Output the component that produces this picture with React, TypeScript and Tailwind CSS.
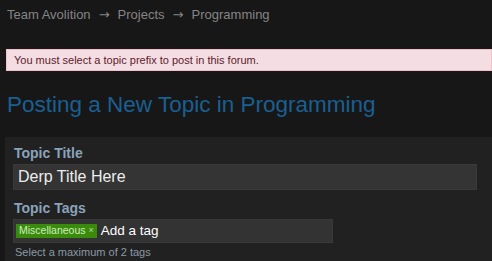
import React from 'react';

const font = { fontFamily: '"Liberation Sans", Arial, sans-serif' };

const Arrow: React.FC = () => (
  <span className="mx-[7px] inline-block w-[13px] text-center" style={{ fontFamily: '"DejaVu Sans", sans-serif' }}>
    →
  </span>
);

const Breadcrumb: React.FC = () => (
  <div className="flex h-[28px] items-start pl-[7px] pt-[6px] text-[13px] leading-[17px] text-[#858585]">
    <span>Team Avolition</span>
    <Arrow />
    <span>Projects</span>
    <Arrow />
    <span>Programming</span>
  </div>
);

export default function App() {
  return (
    <div className="w-[492px] h-[261px] overflow-hidden bg-[#171717]" style={font}>
      <Breadcrumb />

      <div className="mt-[21px] ml-[6px] h-[22px] border border-[#f3bfcb] bg-[#f4dee3] pl-[7px] text-[11px] leading-[20px] text-[#5c1a2b]">
        You must select a topic prefix to post in this forum.
      </div>

      <h1 className="mt-[21px] pl-[7px] text-[22.5px] leading-[26px] text-[#1a5f92]">
        Posting a New Topic in Programming
      </h1>

      <div className="mt-[19px] ml-[5px] bg-[#212121] pl-[8px] pt-[8px] pb-[20px]">
        <label className="block pl-[1px] text-[14px] font-bold leading-[17px] text-[#8aa3bb]">
          Topic Title
        </label>
        <div className="mt-[2px] flex h-[26px] w-[464px] items-center bg-[#343434] pl-[5px] text-[16px] text-[#ececec] shadow-[inset_0_0_0_1px_#3a3a3a]">
          Derp Title Here
        </div>

        <label className="mt-[10px] block pl-[1px] text-[14px] font-bold leading-[17px] text-[#8aa3bb]">
          Topic Tags
        </label>
        <div className="mt-[2px] flex h-[24px] w-[320px] items-center gap-[4px] bg-[#333333] pl-[3px] shadow-[inset_0_0_0_1px_#3a3a3a]">
          <span className="flex h-[14px] items-center gap-[3px] bg-[#3a8a0b] px-[3px] text-[10.5px] text-[#cdeec0]">
            Miscellaneous <span className="text-[9px] text-[#b6d6a8]">×</span>
          </span>
          <span className="text-[13.5px] text-white">Add a tag</span>
        </div>
        <div className="mt-[3px] pl-[2px] text-[11px] leading-[13px] text-[#8a99a6]">
          Select a maximum of 2 tags
        </div>
      </div>
    </div>
  );
}
